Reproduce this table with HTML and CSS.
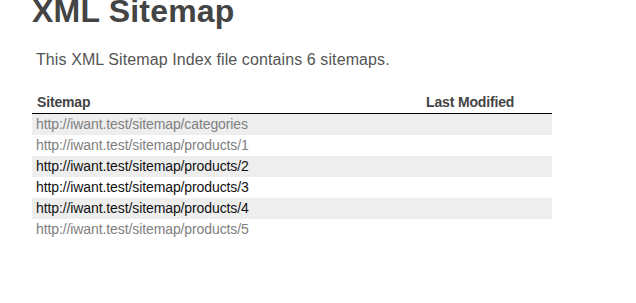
FILE: index.html
```html
<!DOCTYPE html>
<html>
<head>
<meta charset="utf-8">
<title>XML Sitemap</title>
<link rel="stylesheet" href="styles.css">
</head>
<body>
<div class="page">
  <h1 class="title">XML Sitemap</h1>
  <p class="intro">This XML Sitemap Index file contains 6 sitemaps.</p>
  <table class="sitemaps">
    <thead>
      <tr><th class="col-loc">Sitemap</th><th class="col-mod">Last Modified</th></tr>
    </thead>
    <tbody>
      <tr class="odd"><td><a class="visited" href="#">http://iwant.test/sitemap/categories</a></td><td></td></tr>
      <tr><td><a class="visited" href="#">http://iwant.test/sitemap/products/1</a></td><td></td></tr>
      <tr class="odd"><td><a href="#">http://iwant.test/sitemap/products/2</a></td><td></td></tr>
      <tr><td><a href="#">http://iwant.test/sitemap/products/3</a></td><td></td></tr>
      <tr class="odd"><td><a href="#">http://iwant.test/sitemap/products/4</a></td><td></td></tr>
      <tr><td><a class="visited" href="#">http://iwant.test/sitemap/products/5</a></td><td></td></tr>
    </tbody>
  </table>
</div>
</body>
</html>
```
FILE: styles.css
```css
html, body {
  margin: 0;
  padding: 0;
  background: #fff;
}
body {
  font-family: "Liberation Sans", Arial, sans-serif;
  color: #444;
}
.page {
  padding-left: 32px;
}
.title {
  margin: -5px 0 0;
  font-size: 32px;
  line-height: 32px;
  font-weight: bold;
  letter-spacing: 0.2px;
  color: #444;
}
.intro {
  margin: 23px 0 0 4px;
  font-size: 16px;
  line-height: 20px;
  letter-spacing: 0.1px;
  color: #555;
}
.sitemaps {
  margin-top: 20px;
  width: 520px;
  border-collapse: collapse;
  border-spacing: 0;
}
.sitemaps th {
  text-align: left;
  font-size: 14px;
  line-height: 16px;
  font-weight: bold;
  letter-spacing: -0.15px;
  color: #444;
  padding: 4px 5px 3px;
  border-bottom: 1px solid #000;
}
.col-loc { width: 379px; }
.col-mod { width: 121px; }
.sitemaps td {
  font-size: 14px;
  line-height: 20px;
  padding: 0 4px 1px;
}
.sitemaps tr.odd td {
  background: #eee;
}
.sitemaps a {
  color: #111;
  text-decoration: none;
  letter-spacing: -0.1px;
}
.sitemaps a.visited {
  color: #808080;
}
```
